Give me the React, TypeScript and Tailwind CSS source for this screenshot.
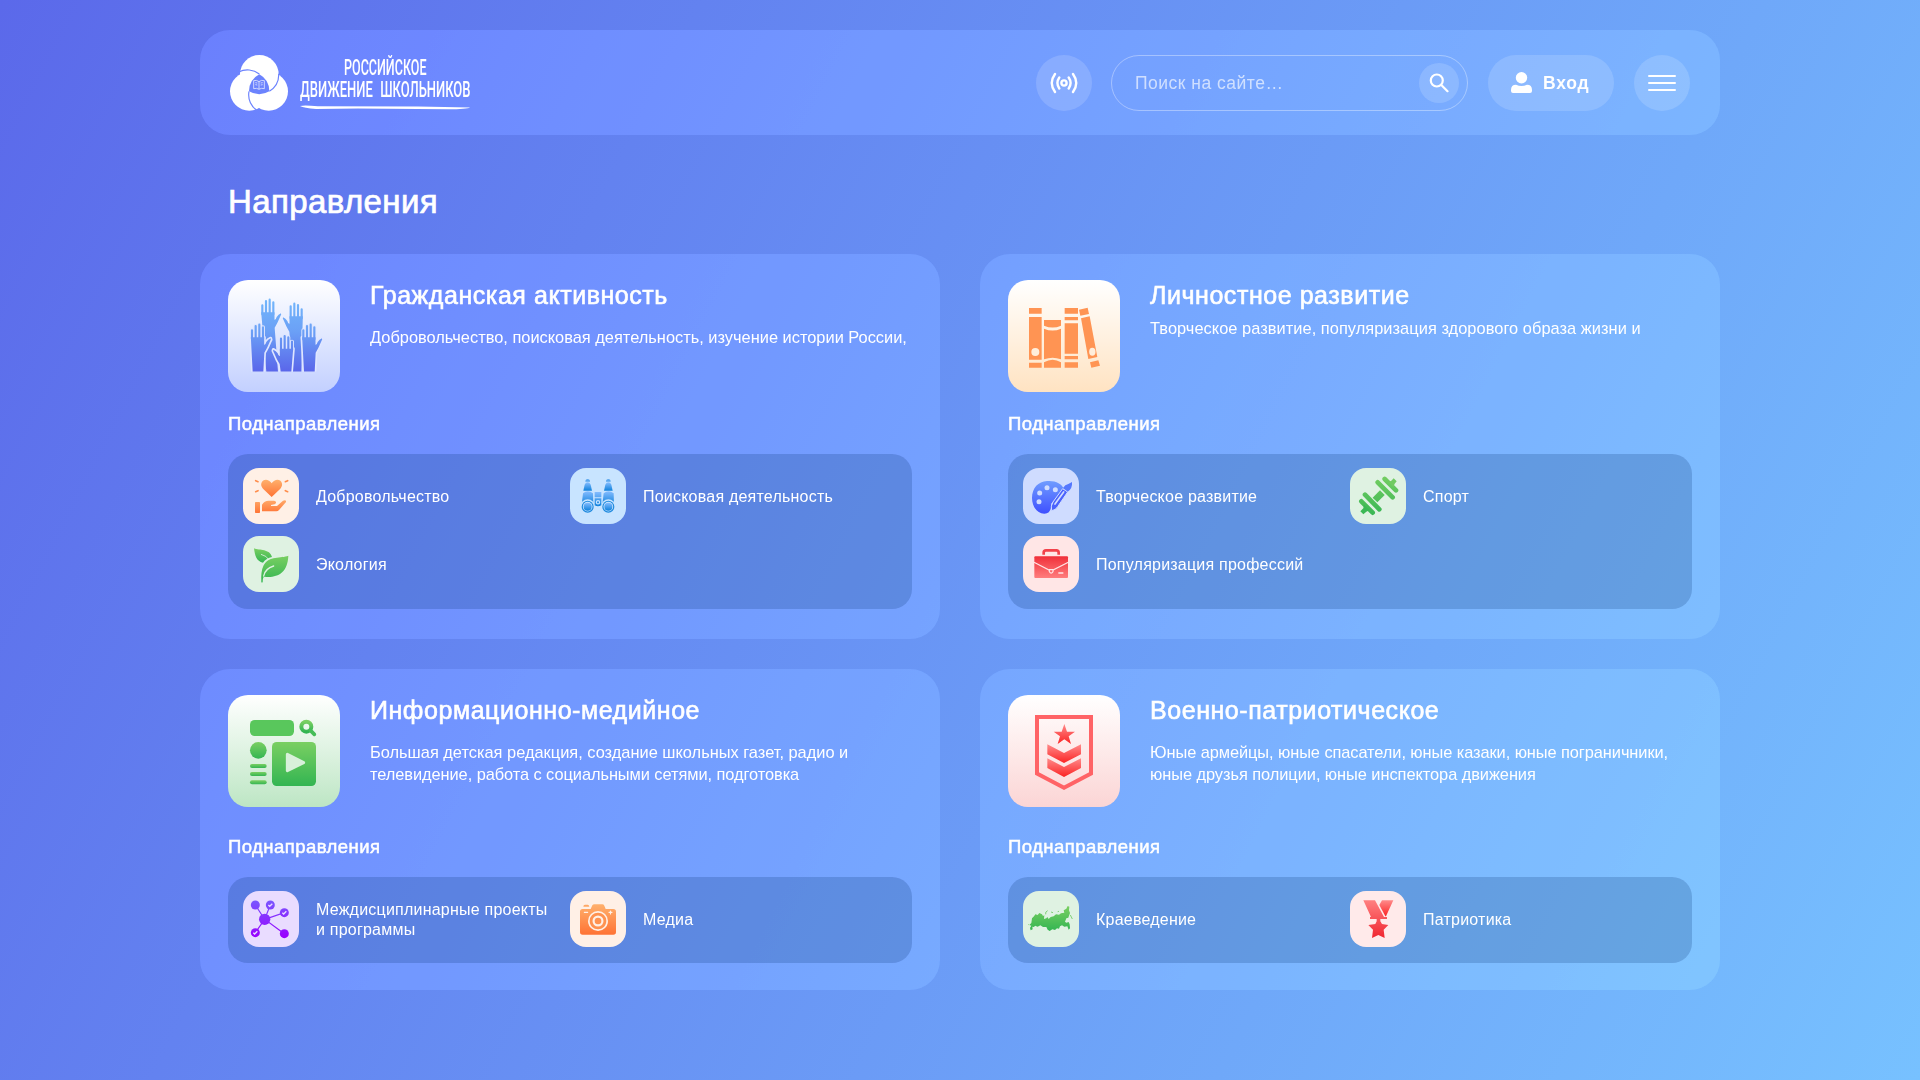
import type { ReactNode } from "react";

function Defs() {
  const g = (id: string, a: string, b: string) => (
    <linearGradient id={id} x1="0" y1="0" x2="0" y2="1">
      <stop offset="0" stopColor={a} />
      <stop offset="1" stopColor={b} />
    </linearGradient>
  );
  return (
    <svg className="absolute h-0 w-0" aria-hidden="true">
      <defs>
        {g("orange", "#ffb06c", "#ff7334")}
        {g("green", "#7acf62", "#33b552")}
        {g("red", "#f0303a", "#ff7d7d")}
        {g("redDown", "#ff8a8a", "#fb2424")}
        {g("sky", "#85bcff", "#0f82dc")}
        {g("indigo", "#6f9cff", "#3f50ff")}
        <linearGradient id="hands" gradientUnits="userSpaceOnUse" x1="0" y1="57" x2="0" y2="275">
          <stop offset="0" stopColor="#72b6fb" />
          <stop offset="0.45" stopColor="#6ba0f6" />
          <stop offset="1" stopColor="#5a66ea" />
        </linearGradient>
        <linearGradient id="medal" gradientUnits="userSpaceOnUse" x1="0" y1="28" x2="0" y2="142">
          <stop offset="0" stopColor="#ff8080" />
          <stop offset="1" stopColor="#f02530" />
        </linearGradient>
        <linearGradient id="volunteer" gradientUnits="userSpaceOnUse" x1="0" y1="98" x2="0" y2="136">
          <stop offset="0" stopColor="#ffa767" />
          <stop offset="1" stopColor="#ff7334" />
        </linearGradient>
        <linearGradient id="binoc" gradientUnits="userSpaceOnUse" x1="0" y1="33" x2="0" y2="134">
          <stop offset="0" stopColor="#5fa9ef" />
          <stop offset="1" stopColor="#0f82dc" />
        </linearGradient>
        <linearGradient id="net" gradientUnits="userSpaceOnUse" x1="0" y1="30" x2="0" y2="140">
          <stop offset="0" stopColor="#7a55ff" />
          <stop offset="1" stopColor="#9a00ff" />
        </linearGradient>
        <linearGradient id="gym" gradientUnits="userSpaceOnUse" x1="0" y1="26" x2="0" y2="146">
          <stop offset="0" stopColor="#74cd62" />
          <stop offset="1" stopColor="#36b654" />
        </linearGradient>
      </defs>
    </svg>
  );
}

function Big({ children }: { children: ReactNode }) {
  return <svg viewBox="0 0 336 336" className="size-28">{children}</svg>;
}
function Small({ children }: { children: ReactNode }) {
  return <svg viewBox="0 0 168 168" className="size-14">{children}</svg>;
}

function hand(x: number, y: number, dir: number, left = 2, right = 34) {
  const p = (a: number, b: number) => `${x + dir * a} ${y + b}`;
  return {
    fingers: `M${p(0, 17)}V${y + 44}M${p(11, 4)}V${y + 44}M${p(22, 0)}V${y + 44}M${p(33, 8)}V${y + 44}`,
    body: `M${p(-3.5, 38)}L${p(36.5, 38)}L${p(36.5, 60)}Q${p(40, 62)} ${p(43, 52)}Q${p(48, 44)} ${p(56, 41)}Q${p(58, 44)} ${p(54, 50)}L${p(46, 68)}Q${p(42, 76)} ${p(37, 84)}L${x + dir * right} 275L${x + dir * left} 275Z`,
  };
}

function HandsIcon() {
  const back = [hand(103, 59, 1, 12, 47), hand(221, 71, -1, 1, 27)];
  const front = [hand(72, 134, 1), hand(226, 134, 1), hand(192, 168, -1)];
  return (
    <Big>
      {back.map((h, i) => (
        <g key={i}>
          <path d={h.fingers} stroke="url(#hands)" strokeWidth="6.5" strokeLinecap="round" />
          <path d={h.body} fill="url(#hands)" />
        </g>
      ))}
      {front.map((h, i) => (
        <g key={i}>
          <path d={h.fingers} stroke="#dfe6ff" strokeWidth="12" strokeLinecap="round" />
          <path d={h.body} fill="#dfe6ff" stroke="#dfe6ff" strokeWidth="10" strokeLinejoin="round" />
        </g>
      ))}
      {front.map((h, i) => (
        <g key={i}>
          <path d={h.fingers} stroke="url(#hands)" strokeWidth="6.5" strokeLinecap="round" />
          <path d={h.body} fill="url(#hands)" />
        </g>
      ))}
      <rect x="64" y="275" width="206" height="6" fill="#cdd8ff" />
    </Big>
  );
}

function BooksIcon() {
  return (
    <Big>
      <g fill="#ff9453">
        <path d="M63 84h38v17H63zM63 111h38v128H63zM63 248h38v15H63z" />
        <path d="M108 120H159V137Q134 148 108 137ZM108 146Q134 157 159 146V238Q134 228 108 238ZM108 247Q134 232 159 247V263H108Z" />
        <path d="M170 84h40v17h-40zM170 111h40v10h-40zM170 130h40v91h-40zM170 228h40v10h-40zM170 247h40v16h-40z" />
        <path d="M213 89L239 83L243 102L217 107ZM219 115L245 109L268 231L241 237ZM246 247L271 241L276 257L250 263Z" />
      </g>
      <circle cx="82" cy="216" r="12" fill="#ffeedb" />
      <ellipse cx="253" cy="215" rx="9.5" ry="12" fill="#ffeedb" />
    </Big>
  );
}

function MediaPageIcon() {
  return (
    <Big>
      <rect x="66" y="75" width="132" height="48" rx="14" fill="#59c75c" />
      <circle cx="235" cy="95" r="15" fill="none" stroke="url(#green)" strokeWidth="12" />
      <path d="M248 107L259 118" stroke="#45bd57" strokeWidth="11" strokeLinecap="round" />
      <circle cx="91" cy="166" r="25" fill="url(#green)" />
      <rect x="66" y="207" width="50" height="12" rx="6" fill="url(#green)" />
      <rect x="66" y="231" width="50" height="12" rx="6" fill="url(#green)" />
      <rect x="66" y="256" width="50" height="12" rx="6" fill="url(#green)" />
      <rect x="132" y="141" width="132" height="132" rx="14" fill="url(#green)" />
      <path d="M178 178L227 203L178 227Z" fill="#d8f0da" stroke="#d8f0da" strokeWidth="9" strokeLinejoin="round" />
    </Big>
  );
}

function ShieldIcon() {
  return (
    <Big>
      <path d="M87 66H249V235.500L168 278L87 235.500Z" fill="none" stroke="#ff6366" strokeWidth="12" />
      <path d="M169 87L177 110H201L182 124L189 147L169 133L149 147L156 124L137 110H161Z" fill="url(#redDown)" />
      <path d="M118 148L168 174L219 148V178L168 204L118 178Z" fill="url(#redDown)" />
      <path d="M118 190L168 216L219 190V219L168 246L118 219Z" fill="url(#redDown)" />
    </Big>
  );
}

function VolunteerIcon() {
  return (
    <Small>
      <path d="M86 87L60 62C46 46 62 28 78 38Q84 42 86 46Q88 42 94 38C110 28 126 46 112 62Z" fill="url(#orange)" />
      <path d="M38 38L45 41M38 71L45 68M134 38L127 41M134 71L127 68" stroke="#ff8d4b" strokeWidth="5" strokeLinecap="round" />
      <rect x="36" y="102" width="15" height="33" rx="2" fill="url(#volunteer)" />
      <path d="M57 130V110Q64 98 77 98H93Q100 98 99 105Q98 109 84 111V114H102L120 98Q130 94 129 102L108 126Q105 130 100 130Z" fill="url(#volunteer)" />
    </Small>
  );
}

function BinocularsIcon() {
  const side = (cx: number) => (
    <g key={cx}>
      <path d={`M${cx - 7} 41Q${cx - 7} 33 ${cx} 33Q${cx + 7} 33 ${cx + 7} 41Z`} fill="url(#binoc)" />
      <path d={`M${cx - 13} 68L${cx - 9} 50Q${cx - 6} 43 ${cx} 43Q${cx + 6} 43 ${cx + 9} 50L${cx + 13} 68Z`} fill="url(#sky)" />
      <path d={`M${cx - 18} 110L${cx - 14} 76Q${cx} 64 ${cx + 16} 76L${cx + 17} 110Z`} fill="url(#sky)" />
      <circle cx={cx} cy="116" r="22" fill="#c8e4ff" />
      <circle cx={cx} cy="116" r="18" fill="#1f8ade" />
      <circle cx={cx} cy="116" r="14.500" fill="#c8e4ff" />
      <circle cx={cx} cy="116" r="12" fill="url(#sky)" />
    </g>
  );
  return (
    <Small>
      {side(53)}
      {side(115)}
      <path d="M74 72h20v16H74zM74 91h20v21q-10 6-20 0z" fill="url(#sky)" />
      <circle cx="84" cy="103" r="5" fill="none" stroke="#c8e4ff" strokeWidth="3.500" />
    </Small>
  );
}

function LeafIcon() {
  return (
    <Small>
      <path d="M33 37C50 44 80 38 87 63Q70 66 60 80C40 76 36 60 33 37Z" fill="url(#green)" />
      <path d="M54 55Q70 58 80 74" stroke="#dff2e2" strokeWidth="2.500" fill="none" />
      <path d="M136 59C114 68 78 58 62 88Q53 106 55 139Q58 141 59 138Q59 122 65 122C102 126 134 112 136 59Z" fill="url(#green)" />
      <path d="M62 120Q66 98 92 90" stroke="#dff2e2" strokeWidth="4" fill="none" strokeLinecap="round" />
    </Small>
  );
}

function PaletteIcon() {
  return (
    <Small>
      <path d="M72 39C98 37 116 47 122 62L84 108Q86 137 64 137C40 137 27 112 27 90C27 60 46 40 72 39Z" fill="url(#indigo)" />
      <g fill="#cfdcff">
        <circle cx="72" cy="59" r="7.500" />
        <circle cx="97" cy="65" r="7.500" />
        <circle cx="50" cy="75" r="7.500" />
        <circle cx="48" cy="101" r="7.500" />
      </g>
      <path d="M119 62L134 72L104 116Q97 127 86 128Q82 114 90 102Z" fill="#4a62fd" stroke="#cfdcff" strokeWidth="3" />
      <path d="M122 72L96 108" stroke="#cfdcff" strokeWidth="5" strokeLinecap="round" />
      <path d="M147 42Q149 62 134 71L120 60Q126 50 136 48Z" fill="#5578fe" />
    </Small>
  );
}

function DumbbellIcon() {
  return (
    <Small>
      <path d="M83 43L128 88M104 33L138 67M45 80L88 124M34 100L68 134" stroke="url(#gym)" strokeWidth="14" strokeLinecap="round" />
      <path d="M97 74L75 96" stroke="url(#gym)" strokeWidth="20" />
      <path d="M115 42L124 38L131 31L140 40L134 47L130 58Z" fill="#70cb61" />
      <path d="M42 110L40 121L31 130L40 139L49 131L58 127Z" fill="#3bb855" />
    </Small>
  );
}

function BriefcaseIcon() {
  return (
    <Small>
      <path d="M62 56V50Q62 43 69 43H100Q107 43 107 50V56" fill="none" stroke="#f2424a" strokeWidth="8" />
      <rect x="34" y="61" width="101" height="65" rx="3" fill="url(#red)" />
      <path d="M33 79L84 105L136 79" fill="none" stroke="#ffe6e6" strokeWidth="3.500" />
      <path d="M79 101H90V107Q84.500 116 79 107Z" fill="#ff6468" stroke="#ffe6e6" strokeWidth="3.500" />
      <path d="M106 111H121" stroke="#ffe6e6" strokeWidth="4" />
    </Small>
  );
}

function NetworkIcon() {
  return (
    <Small>
      <path d="M65 85L37 42M65 85L82 42M65 85L124 65M65 85L37 125M65 85L124 128" stroke="url(#net)" strokeWidth="3.500" />
      <g fill="url(#net)">
        <circle cx="65" cy="85" r="17" />
        <circle cx="37" cy="42" r="13.500" />
        <circle cx="82" cy="42" r="13.500" />
        <circle cx="124" cy="65" r="13.500" />
        <circle cx="37" cy="125" r="13.500" />
        <circle cx="124" cy="128" r="13.500" />
      </g>
      <path d="M76 42L80 46L88 38M118 65L122 69L130 61M31 125L35 129L43 121" fill="none" stroke="#e9dcff" strokeWidth="4" />
    </Small>
  );
}

function CameraIcon() {
  return (
    <Small>
      <path d="M38 54H62L67 43Q69 40 73 40H97Q101 40 103 44L107 54H130Q138 54 138 62V123Q138 131 130 131H38Q30 131 30 123V62Q30 54 38 54Z" fill="url(#orange)" />
      <path d="M40 47Q40 41 45 41H53Q57 41 58 47Z" fill="#ffa864" />
      <circle cx="84" cy="90" r="30" fill="#fff0e6" />
      <circle cx="84" cy="90" r="25" fill="#ff9250" />
      <circle cx="84" cy="90" r="16.500" fill="#fff0e6" />
      <circle cx="84" cy="90" r="10" fill="#ff9250" />
      <path d="M43 64H53M117 64H126M121.500 60V69" stroke="#fff0e6" strokeWidth="3.500" strokeLinecap="round" />
    </Small>
  );
}

function RussiaIcon() {
  return (
    <Small>
      <path
        d="M25 96L27 82L33 76L37 70L44 72L49 66L57 70L60 75L64 73L63 84L70 82L73 78L77 84L83 78L92 76L99 70L108 71L114 67L124 65L122 58L130 53L134 45L139 47L138 58L141 66L138 74L136 80L130 82L126 92L130 95L137 93L140 100L141 112L137 116L133 106L124 107L117 103L111 106L108 113L102 112L96 117L88 115L80 120L74 116L70 108L60 108L52 103L44 107L36 104L33 108L28 107L29 115L23 118L21 111L25 104L19 102Z"
        fill="url(#green)"
      />
      <path d="M68 70Q66 62 74 59M84 63L90 65M104 62L108 61M142 72L148 84M16 101L18 100" stroke="#6fca64" strokeWidth="2.500" fill="none" />
    </Small>
  );
}

function MedalIcon() {
  return (
    <Small>
      <path d="M40 28H75L102 78H111V84H91V91L96 99L115 102L101 116L104 141L85 132L66 141L69 116L55 102L76 99L80 91V84H60V78H63Z" fill="url(#medal)" />
      <path d="M96 28H130L108 76H106L88 42Z" fill="url(#redDown)" />
    </Small>
  );
}

function Logo() {
  return (
    <div className="flex items-start">
      <svg viewBox="0 0 174 168" className="h-14 w-[58px]">
        <defs>
          <mask id="swirl">
            <g fill="#fff">
              <circle cx="88" cy="58" r="58" />
              <circle cx="58" cy="109" r="58" />
              <circle cx="116" cy="109" r="58" />
            </g>
            <path d="M88 58A58 58 0 0 1 118 109A58 58 0 0 1 57 109A58 58 0 0 1 88 58Z" fill="#000" />
            <path d="M26 51A58 58 0 0 1 88 57M146 56A58 58 0 0 1 118 109M84 169A58 58 0 0 1 57 109" fill="none" stroke="#000" strokeWidth="3.500" />
          </mask>
        </defs>
        <rect width="174" height="168" fill="#fff" mask="url(#swirl)" />
        <path d="M71 77Q80 74 87 80Q94 74 103 77V101Q94 98 87 103Q80 98 71 101ZM87 80V102M76 83L82 84M76 89L82 90M92 84L98 83M92 90L98 89" fill="none" stroke="#fff" strokeWidth="2" />
      </svg>
      <svg viewBox="0 0 174 56" className="ml-[10px] h-14 w-[174px] overflow-visible" fill="#fff">
        <g fontFamily="Roboto,'Liberation Sans',sans-serif" fontWeight="500" fontSize="21.500">
          <text x="46" y="19.800" textLength="82.500" lengthAdjust="spacingAndGlyphs">РОССИЙСКОЕ</text>
          <text x="2" y="41.500" textLength="170.500" lengthAdjust="spacingAndGlyphs" wordSpacing="7">ДВИЖЕНИЕ ШКОЛЬНИКОВ</text>
        </g>
        <path d="M2 51Q6 50 20 51.300L120 51.500L172 52.500Q169 54.300 150 54.300L60 53.500L18 54Q6 53 2 51Z" />
      </svg>
    </div>
  );
}

function Header() {
  return (
    <header className="flex h-[105px] items-center rounded-[30px] bg-[#a6c4ff]/10 px-[30px] backdrop-brightness-[1.07]">
      <Logo />
      <div className="ml-auto flex items-center">
        <button className="flex size-14 items-center justify-center rounded-full bg-white/15">
          <svg viewBox="0 0 28 22" className="h-[22px] w-7" fill="none" stroke="#fff" strokeWidth="2.400" strokeLinecap="round">
            <path d="M5 2Q-1.500 11 5 20M9.300 5.500Q5.500 11 9.300 16.500M18.700 5.500Q22.500 11 18.700 16.500M23 2Q29.500 11 23 20" />
            <circle cx="14" cy="11" r="2.600" />
          </svg>
        </button>
        <div className="ml-[19px] flex h-14 w-[357px] items-center justify-between rounded-full border border-white/35 pl-[23px] pr-2">
          <span className="pt-px text-[17.5px] tracking-[0.5px] text-white/65">Поиск на сайте…</span>
          <button className="flex size-10 items-center justify-center rounded-full bg-white/15">
            <svg viewBox="0 0 20 20" className="size-5" fill="none" stroke="#fff" strokeWidth="2.200" strokeLinecap="round">
              <circle cx="7.800" cy="7.500" r="6" />
              <path d="M12.300 12L18.500 18.200" />
            </svg>
          </button>
        </div>
        <button className="ml-5 flex h-14 w-[126px] items-center rounded-full bg-white/15 pl-[23px]">
          <svg viewBox="0 0 21 21" className="size-[21px]" fill="#fff">
            <circle cx="10.500" cy="5.800" r="5.700" />
            <path d="M0 18Q0 12.800 5 12.800Q10.500 15.400 16 12.800Q21 12.800 21 18V19Q21 21 19 21H2Q0 21 0 19Z" />
          </svg>
          <span className="ml-[11px] pt-0.5 text-[17.5px] font-bold tracking-[0.8px]">Вход</span>
        </button>
        <button className="ml-5 flex size-14 flex-col items-center justify-center gap-[5px] rounded-full bg-white/15">
          <span className="h-0.5 w-7 rounded-full bg-white" />
          <span className="h-0.5 w-7 rounded-full bg-white" />
          <span className="h-0.5 w-7 rounded-full bg-white" />
        </button>
      </div>
    </header>
  );
}

type Sub = { label: string; tile: string; icon: ReactNode };
type Card = {
  title: string;
  text: [string, string][];
  tile: string;
  icon: ReactNode;
  subs: Sub[];
  headClass: string;
  textClass: string;
  panelClass: string;
};

const cards: Card[] = [
  {
    title: "Гражданская активность",
    text: [["Добровольчество, поисковая деятельность, изучение истории России,", "tracking-normal"]],
    tile: "from-white to-[#c3d0ff]",
    icon: <HandsIcon />,
    headClass: "h-[133px]",
    textClass: "mt-[15px]",
    panelClass: "h-[155px]",
    subs: [
      { label: "Добровольчество", tile: "bg-[#fff0e6]", icon: <VolunteerIcon /> },
      { label: "Поисковая деятельность", tile: "bg-[#c8e4ff]", icon: <BinocularsIcon /> },
      { label: "Экология", tile: "bg-[#dff2e2]", icon: <LeafIcon /> },
    ],
  },
  {
    title: "Личностное развитие",
    text: [["Творческое развитие, популяризация здорового образа жизни и", "tracking-[0.04px]"]],
    tile: "from-white to-[#ffe3c2]",
    icon: <BooksIcon />,
    headClass: "h-[133px]",
    textClass: "mt-[6px]",
    panelClass: "h-[155px]",
    subs: [
      { label: "Творческое развитие", tile: "bg-[#cfdcff]", icon: <PaletteIcon /> },
      { label: "Спорт", tile: "bg-[#dff2e2]", icon: <DumbbellIcon /> },
      { label: "Популяризация профессий", tile: "bg-[#ffe6e6]", icon: <BriefcaseIcon /> },
    ],
  },
  {
    title: "Информационно-медийное",
    text: [
      ["Большая детская редакция, создание школьных газет, радио и", "tracking-normal"],
      ["телевидение, работа с социальными сетями, подготовка", "tracking-[-0.07px]"],
    ],
    tile: "from-white to-[#bde6c4]",
    icon: <MediaPageIcon />,
    headClass: "h-[141px]",
    textClass: "mt-[15px]",
    panelClass: "h-[86px]",
    subs: [
      { label: "Междисциплинарные проекты\nи программы", tile: "bg-[#e9dcff]", icon: <NetworkIcon /> },
      { label: "Медиа", tile: "bg-[#fff0e6]", icon: <CameraIcon /> },
    ],
  },
  {
    title: "Военно-патриотическое",
    text: [
      ["Юные армейцы, юные спасатели, юные казаки, юные пограничники,", "tracking-[-0.08px]"],
      ["юные друзья полиции, юные инспектора движения", "tracking-[-0.06px]"],
    ],
    tile: "from-white to-[#fbd5d5]",
    icon: <ShieldIcon />,
    headClass: "h-[141px]",
    textClass: "mt-[15px]",
    panelClass: "h-[86px]",
    subs: [
      { label: "Краеведение", tile: "bg-[#dff2e2]", icon: <RussiaIcon /> },
      { label: "Патриотика", tile: "bg-[#ffeaea]", icon: <MedalIcon /> },
    ],
  },
];

function DirectionCard({ card }: { card: Card }) {
  return (
    <section className="rounded-[30px] bg-[#a6c4ff]/10 px-7 pt-[26px] backdrop-brightness-[1.07]">
      <div className={`flex ${card.headClass}`}>
        <div className={`size-28 shrink-0 overflow-hidden rounded-[20px] bg-linear-to-b ${card.tile}`}>{card.icon}</div>
        <div className="ml-[30px]">
          <h2 className="whitespace-nowrap text-[25px] leading-[31px] tracking-[0.55px] [-webkit-text-stroke:0.6px_white]">{card.title}</h2>
          <p className={`text-[16.4px] leading-[22px] ${card.textClass}`}>
            {card.text.map(([line, tracking]) => (
              <span key={line} className={`block whitespace-nowrap ${tracking}`}>{line}</span>
            ))}
          </p>
        </div>
      </div>
      <h3 className="text-[18.5px] leading-[22px] tracking-[0.45px] [-webkit-text-stroke:0.5px_white]">Поднаправления</h3>
      <div className={`mt-[19px] grid grid-cols-[327px_1fr] content-start gap-y-3 rounded-[20px] bg-[#002668]/20 pl-[15px] pt-[14px] ${card.panelClass}`}>
        {card.subs.map((s) => (
          <div key={s.label} className="flex h-14 items-center">
            <div className={`size-14 shrink-0 overflow-hidden rounded-2xl ${s.tile}`}>{s.icon}</div>
            <span className="ml-[17px] whitespace-pre pt-0.5 text-[16px] leading-5 tracking-[0.22px]">{s.label}</span>
          </div>
        ))}
      </div>
    </section>
  );
}

export default function App() {
  return (
    <div className="h-[1080px] w-[1920px] overflow-hidden bg-[linear-gradient(117deg,#5b69ea,#77c1ff)] pt-[30px] font-['Liberation_Sans',Arial,sans-serif] text-white">
      <Defs />
      <div className="mx-auto w-[1520px]">
        <Header />
        <h1 className="ml-7 mt-[47px] text-[33px] leading-10 tracking-[0.4px] [-webkit-text-stroke:0.7px_white]">Направления</h1>
        <main className="mt-8 grid grid-cols-2 grid-rows-[385px_321px] gap-x-10 gap-y-[30px]">
          {cards.map((c) => (
            <DirectionCard key={c.title} card={c} />
          ))}
        </main>
      </div>
    </div>
  );
}
